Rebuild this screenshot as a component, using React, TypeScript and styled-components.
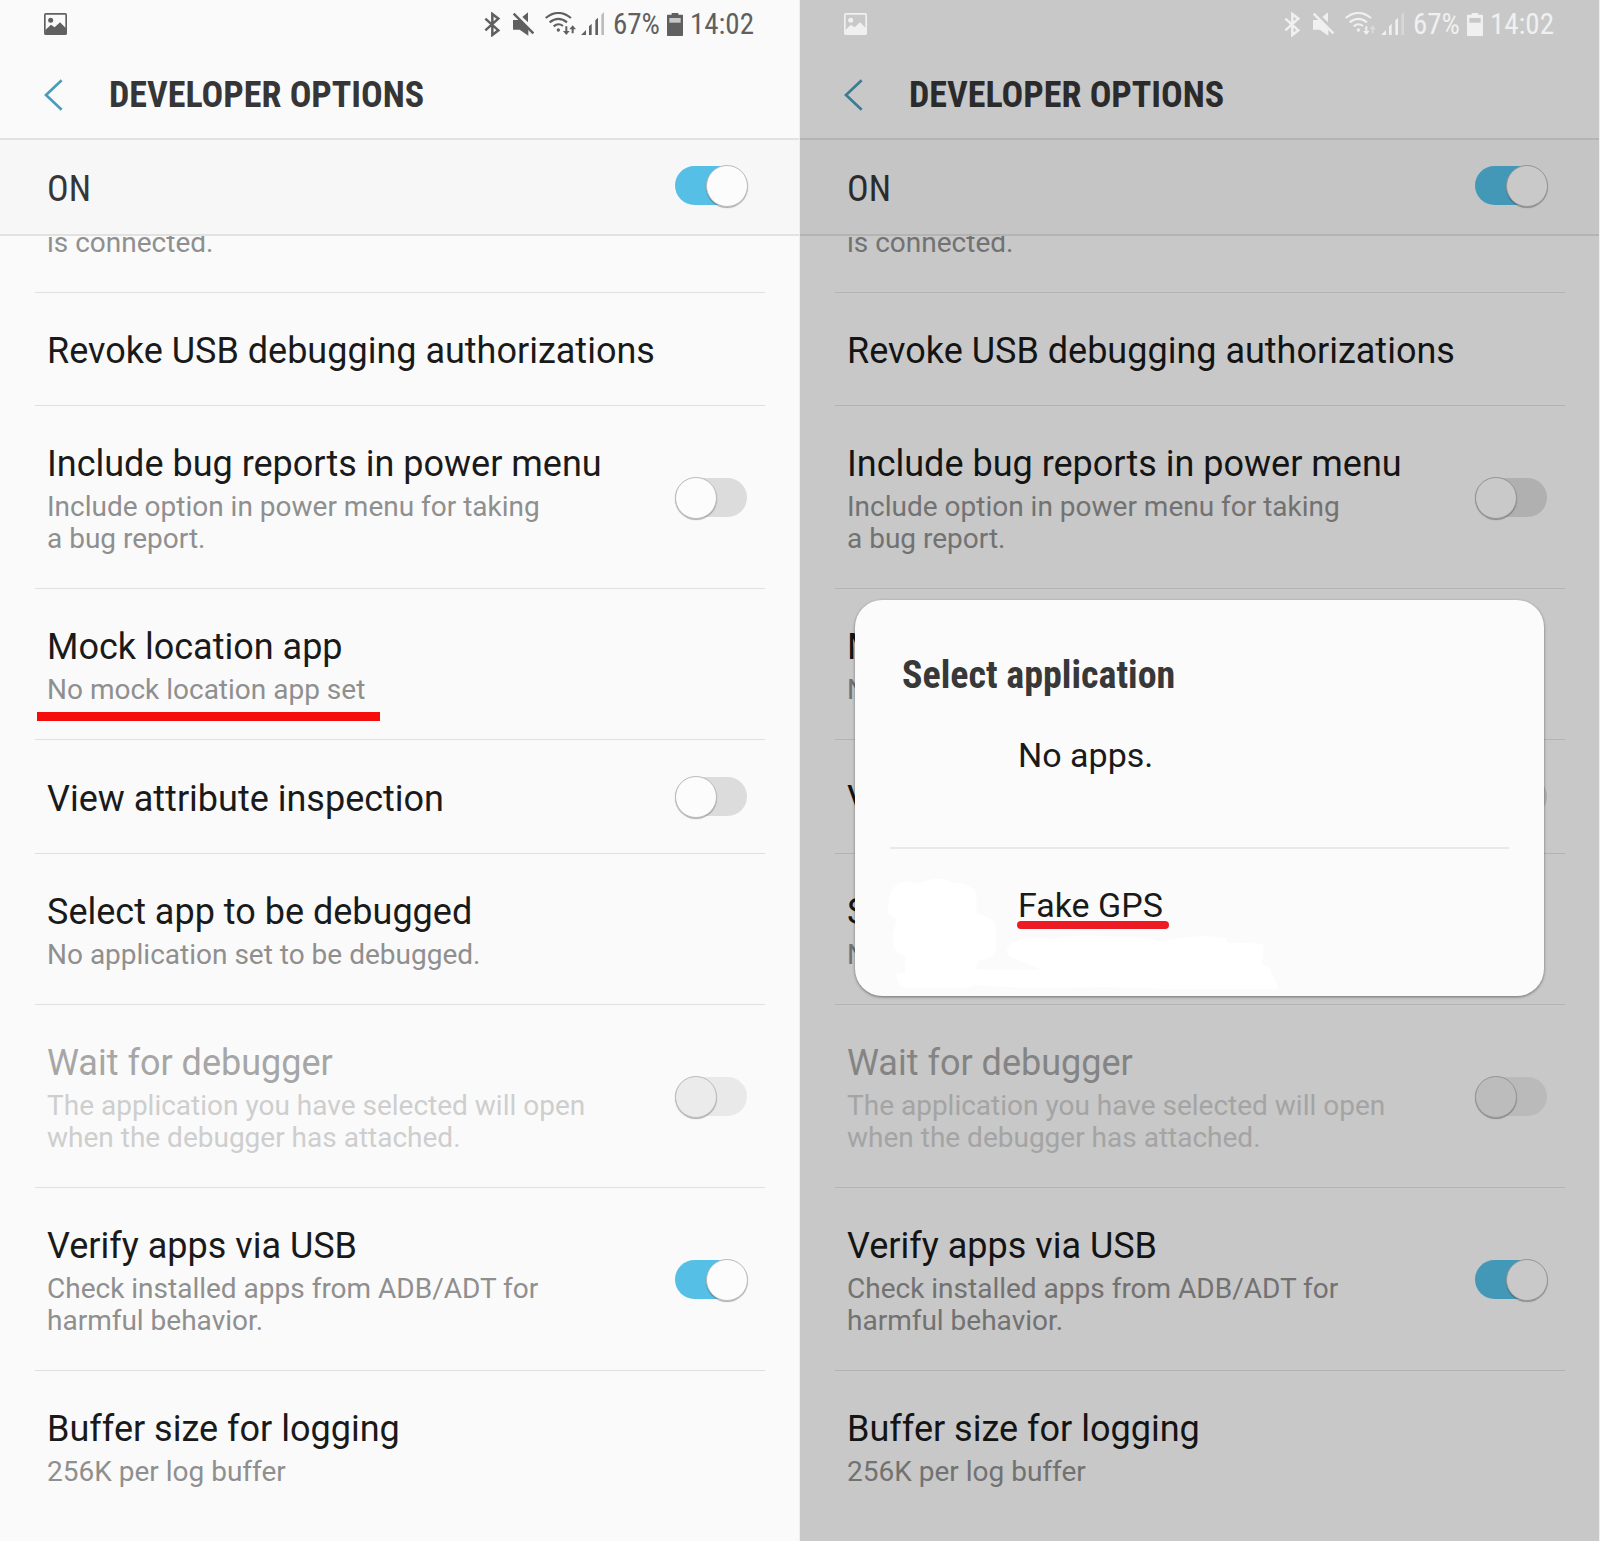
import React, { useId } from "react";
import styled, { createGlobalStyle, css } from "styled-components";

const GlobalStyle = createGlobalStyle`
  *, *::before, *::after { box-sizing: border-box; }
  body { margin: 0; background: #fafafa; }
  button, input { font: inherit; color: inherit; margin: 0; }
`;

const sans = `Roboto, "Noto Sans", sans-serif`;
const condensed = `"Roboto Condensed", "Liberation Sans Narrow", Roboto, sans-serif`;

const Screens = styled.main`
  display: grid;
  grid-template-columns: 1fr 1fr;
  min-height: 100vh;
  font-family: ${sans};
`;

const Phone = styled.section`
  position: relative;
  display: flex;
  flex-direction: column;
  min-width: 0;
  background: #fafafa;
  border-right: 1px solid #eeeeee;
`;

const StatusBar = styled.div<{ $light?: boolean }>`
  position: relative;
  z-index: 2;
  display: flex;
  align-items: center;
  justify-content: space-between;
  height: 48px;
  padding: 0 45px 0 44px;
  color: ${(p) => (p.$light ? "#f0f0f0" : "#606060")};
`;

const StatusGroup = styled.div`
  display: flex;
  align-items: center;
  gap: 8px;
`;

const Indicators = styled.div`
  display: flex;
  align-items: center;
  gap: 11px;
`;

const Readings = styled.div`
  display: flex;
  align-items: center;
  gap: 7px;
  font: 400 29px/34px ${condensed};
`;

const Radio = styled.span`
  display: flex;
  gap: 4px;
`;

const Icon = styled.svg`
  display: block;
  flex: none;
  fill: none;
  stroke: none;
`;

const AppBar = styled.header`
  display: flex;
  align-items: center;
  gap: 46px;
  height: 92px;
  padding: 3px 44px 0;
  border-bottom: 2px solid #e2e2e2;
`;

const BackButton = styled.button`
  display: flex;
  padding: 0;
  border: 0;
  background: none;
  color: #4a9cba;
`;

const ScreenTitle = styled.h1`
  margin: 0;
  font: 700 36px/42px ${condensed};
  color: #363636;
`;

const MasterRow = styled.div`
  display: flex;
  align-items: center;
  justify-content: space-between;
  height: 96px;
  padding: 0 52px 0 47px;
  border-bottom: 2px solid #e2e2e2;
  background: #f7f7f7;
`;

const MasterLabel = styled.label`
  padding-top: 3px;
  font: 400 36px/42px ${condensed};
  color: #363636;
`;

const Viewport = styled.div`
  flex: 1;
  overflow: hidden;
`;

const List = styled.div`
  margin-top: -9px;
  padding: 0 34px 0 35px;
`;

const rowStyle = css`
  display: flex;
  align-items: center;
  justify-content: space-between;
  width: 100%;
  padding: 37px 18px 33px 12px;
  border: 0;
  border-bottom: 1px solid #e0e0e0;
  background: none;
  text-align: left;

  &:last-child { border-bottom: 0; }
`;

const ButtonRow = styled.button`
  ${rowStyle}
`;

const ToggleRow = styled.div`
  ${rowStyle}
`;

const ScrolledRow = styled.div`
  ${rowStyle}
  padding-top: 0;
`;

const RowText = styled.span`
  display: flex;
  flex-direction: column;
  gap: 6px;
`;

const RowTitle = styled.span<{ $dim?: boolean }>`
  font-size: 36px;
  line-height: 42px;
  color: ${(p) => (p.$dim ? "#a6a6a6" : "#1a1a1a")};
`;

const Summary = styled.span<{ $dim?: boolean }>`
  font-size: 28px;
  line-height: 32px;
  white-space: pre-line;
  color: ${(p) => (p.$dim ? "#cecece" : "#8f8f8f")};
`;

const Marked = styled.span`
  position: relative;

  &::after {
    content: "";
    position: absolute;
    left: -10px;
    right: -15px;
    bottom: -15px;
    height: 9px;
    background: #f50d0d;
  }
`;

const Switch = styled.input`
  && { margin-bottom: 4px; }
  appearance: none;
  position: relative;
  flex: none;
  width: 72px;
  height: 39px;
  border-radius: 20px;
  background: #dcdcdc;

  &::before {
    content: "";
    position: absolute;
    top: -1px;
    left: 0;
    width: 42px;
    height: 42px;
    border: 1px solid #bdbdbd;
    border-radius: 50%;
    background: #fcfcfc;
    box-shadow: 0 1px 1px rgba(0, 0, 0, 0.3);
  }

  &:checked { background: #55bfe5; }
  &:checked::before { left: 31px; }

  &:disabled { background: #e9e9e9; }
  &:disabled::before { background: #ebebeb; }
`;

const Scrim = styled.div`
  position: absolute;
  inset: 0;
  z-index: 1;
  background: rgba(0, 0, 0, 0.2);
`;

const Dialog = styled.div`
  position: absolute;
  z-index: 3;
  top: 600px;
  left: 55px;
  right: 55px;
  padding: 53px 35px 64px;
  border-radius: 27px;
  background: #fbfbfb;
  box-shadow: 0 1px 3px rgba(0, 0, 0, 0.45);
`;

const DialogTitle = styled.h2`
  margin: 0;
  padding-left: 12px;
  font: 700 38px/44px ${condensed};
  color: #383838;
`;

const Option = styled.button`
  position: relative;
  z-index: 1;
  display: block;
  width: 100%;
  padding: 38px 0 72px 128px;
  border: 0;
  background: none;
  font-size: 34px;
  line-height: 40px;
  text-align: left;
  color: #1a1a1a;

  & + & {
    padding-top: 36px;
    padding-bottom: 7px;
    border-top: 2px solid #e9e9e9;
  }
`;

const Underlined = styled.span`
  position: relative;

  &::after {
    content: "";
    position: absolute;
    left: -1px;
    right: -6px;
    bottom: -4px;
    height: 8px;
    border-radius: 4px;
    background: #ed1c24;
  }
`;

const Smudge = styled.svg`
  position: absolute;
  left: 32px;
  bottom: 6px;
  width: 392px;
  height: 112px;
  fill: #ffffff;
`;

function PictureIcon() {
  return (
    <Icon width="23" height="22" viewBox="0 0 69 66">
      <rect x="2.5" y="2.5" width="64" height="61" rx="3" stroke="currentColor" strokeWidth="5" />
      <circle cx="20" cy="22" r="7.5" fill="currentColor" />
      <path d="M4 51 21 35 32 43 48 28 66 46V63H4Z" fill="currentColor" />
    </Icon>
  );
}

function BluetoothIcon() {
  return (
    <Icon width="17" height="25" viewBox="0 0 51 75">
      <path d="M4 20 43 55 25 69V6L43 20 4 55" stroke="currentColor" strokeWidth="7.5" />
    </Icon>
  );
}

function MuteIcon() {
  return (
    <Icon width="22" height="24" viewBox="0 0 66 72">
      <path d="M3 24H24L49 49V71L23 53H3Z" fill="currentColor" />
      <path d="M48 1V31L31 15Z" fill="currentColor" />
      <path d="M5 5 64 64" stroke="currentColor" strokeWidth="7" />
    </Icon>
  );
}

function WifiIcon({ idleUpload }: { idleUpload?: boolean }) {
  return (
    <Icon width="32" height="24" viewBox="0 0 96 72">
      <g stroke="currentColor" strokeWidth="6.5">
        <path d="M2 18Q40-12 78 18" />
        <path d="M14 31Q40 10 66 31" />
        <path d="M26 43Q40 31 54 42" />
      </g>
      <circle cx="40" cy="54" r="5" fill="currentColor" />
      <path d="M61 43H67V57H74L64 69 54 57H61Z" fill="currentColor" />
      <path d="M80 64V52H73L83 40 93 52H86V64Z" fill="currentColor" opacity={idleUpload ? 0.45 : 1} />
    </Icon>
  );
}

function SignalIcon() {
  return (
    <Icon width="24" height="24" viewBox="0 0 72 72">
      <path d="M0 69 15 54V69ZM24 69V43L32 35V69ZM43 69V25L51 17V69Z" fill="currentColor" />
      <path d="M61 69V8L69 0V69Z" fill="currentColor" opacity="0.4" />
    </Icon>
  );
}

function BatteryIcon() {
  return (
    <Icon width="16" height="23" viewBox="0 0 48 69">
      <path d="M14 0H34V5H46Q48 5 48 7V67Q48 69 46 69H2Q0 69 0 67V7Q0 5 2 5H14Z" fill="currentColor" />
      <rect x="7" y="15" width="34" height="14" fill="#c8c8c8" />
    </Icon>
  );
}

type Item = {
  title: string;
  summary?: string;
  toggle?: boolean;
  checked?: boolean;
  disabled?: boolean;
  marked?: boolean;
};

const items: Item[] = [
  { title: "Revoke USB debugging authorizations" },
  {
    title: "Include bug reports in power menu",
    summary: "Include option in power menu for taking\na bug report.",
    toggle: true,
  },
  { title: "Mock location app", summary: "No mock location app set", marked: true },
  { title: "View attribute inspection", toggle: true },
  { title: "Select app to be debugged", summary: "No application set to be debugged." },
  {
    title: "Wait for debugger",
    summary: "The application you have selected will open\nwhen the debugger has attached.",
    toggle: true,
    disabled: true,
  },
  {
    title: "Verify apps via USB",
    summary: "Check installed apps from ADB/ADT for\nharmful behavior.",
    toggle: true,
    checked: true,
  },
  { title: "Buffer size for logging", summary: "256K per log buffer" },
];

function SettingRow({ item, marked }: { item: Item; marked: boolean }) {
  const id = useId();
  const text = (
    <RowText>
      <RowTitle $dim={item.disabled}>{item.title}</RowTitle>
      {item.summary && (
        <Summary $dim={item.disabled}>{marked ? <Marked>{item.summary}</Marked> : item.summary}</Summary>
      )}
    </RowText>
  );
  if (!item.toggle) return <ButtonRow type="button">{text}</ButtonRow>;
  return (
    <ToggleRow>
      <label htmlFor={id}>{text}</label>
      <Switch id={id} type="checkbox" defaultChecked={item.checked} disabled={item.disabled} />
    </ToggleRow>
  );
}

function OptionsScreen({ dimmed, children }: { dimmed?: boolean; children?: React.ReactNode }) {
  const masterId = useId();
  return (
    <Phone>
      <StatusBar $light={dimmed}>
        <PictureIcon />
        <StatusGroup>
          <Indicators>
            <BluetoothIcon />
            <MuteIcon />
            <Radio>
              <WifiIcon idleUpload={dimmed} />
              <SignalIcon />
            </Radio>
          </Indicators>
          <Readings>
            <span>67%</span>
            <BatteryIcon />
            <span>14:02</span>
          </Readings>
        </StatusGroup>
      </StatusBar>
      <AppBar>
        <BackButton type="button" aria-label="Back">
          <Icon width="19" height="32" viewBox="0 0 57 96">
            <path d="M53 4 6 48 53 92" stroke="currentColor" strokeWidth="8" />
          </Icon>
        </BackButton>
        <ScreenTitle>DEVELOPER OPTIONS</ScreenTitle>
      </AppBar>
      <MasterRow>
        <MasterLabel htmlFor={masterId}>ON</MasterLabel>
        <Switch id={masterId} type="checkbox" defaultChecked />
      </MasterRow>
      <Viewport>
        <List>
          <ScrolledRow>
            <Summary>is connected.</Summary>
          </ScrolledRow>
          {items.map((item) => (
            <SettingRow key={item.title} item={item} marked={!!item.marked && !dimmed} />
          ))}
        </List>
      </Viewport>
      {dimmed && <Scrim />}
      {children}
    </Phone>
  );
}

export default function App() {
  return (
    <>
      <GlobalStyle />
      <Screens>
        <OptionsScreen />
        <OptionsScreen dimmed>
          <Dialog role="dialog" aria-labelledby="select-application">
            <Smudge viewBox="140 895 1175 335" aria-hidden="true">
              <path d="M150 940Q165 905 205 905L235 912Q262 895 310 898L335 908Q400 912 408 945V1003Q465 1010 467 1050V1110Q465 1135 420 1140L400 1168 600 1170 505 1128Q490 1105 520 1088 560 1068 640 1078 700 1062 800 1070L900 1072 960 1085Q1080 1060 1155 1075L1160 1088 1265 1092Q1272 1120 1262 1150L1290 1168V1180Q1312 1205 1312 1227H990L800 1222 560 1224 400 1217 370 1225H195Q165 1215 170 1180H195V1130Q150 1115 158 1060L170 1018Q140 1010 142 985Z" />
            </Smudge>
            <DialogTitle id="select-application">Select application</DialogTitle>
            <Option type="button">No apps.</Option>
            <Option type="button">
              <Underlined>Fake GPS</Underlined>
            </Option>
          </Dialog>
        </OptionsScreen>
      </Screens>
    </>
  );
}
